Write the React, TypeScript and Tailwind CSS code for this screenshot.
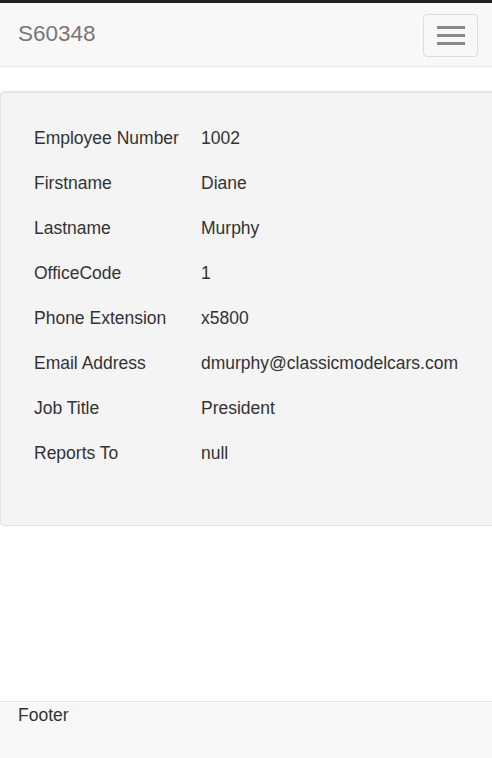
import React from "react";

const rows: [string, string][] = [
  ["Employee Number", "1002"],
  ["Firstname", "Diane"],
  ["Lastname", "Murphy"],
  ["OfficeCode", "1"],
  ["Phone Extension", "x5800"],
  ["Email Address", "dmurphy@classicmodelcars.com"],
  ["Job Title", "President"],
  ["Reports To", "null"],
];

export default function App() {
  return (
    <div
      className="w-[492px] h-[758px] flex flex-col bg-white text-[#333] overflow-hidden"
      style={{ fontFamily: '"Liberation Sans", Arial, sans-serif' }}
    >
      <div className="h-[3px] bg-[#222]" />
      <div className="h-[64px] shrink-0 bg-[#f8f8f8] border-b border-[#e7e7e7] flex items-center justify-between pl-[18px] pr-[14px]">
        <span className="text-[22.5px] text-[#777] leading-none">S60348</span>
        <button className="w-[55px] h-[43px] border border-[#ddd] rounded-[4px] flex flex-col items-center justify-center gap-[5px] mt-[1px]">
          <span className="block w-[28px] h-[3px] bg-[#888]" />
          <span className="block w-[28px] h-[3px] bg-[#888]" />
          <span className="block w-[28px] h-[3px] bg-[#888]" />
        </button>
      </div>
      <div className="h-[24px] shrink-0" />
      <div className="shrink-0 ml-0 w-[500px] bg-[#f4f4f4] border border-[#e3e3e3] rounded-[4px] shadow-[inset_0_1px_1px_rgba(0,0,0,0.05)] pt-[24px] pb-[49px] pl-[33px]">
        {rows.map(([k, v]) => (
          <div key={k} className="flex h-[45px] items-center text-[17.5px]">
            <span className="w-[167px] shrink-0">{k}</span>
            <span>{v}</span>
          </div>
        ))}
      </div>
      <div className="flex-1" />
      <div className="h-[57px] shrink-0 bg-[#f7f7f7] border-t border-[#e5e5e5] pl-[18px] pt-[1px]">
        <span className="text-[17.5px] leading-[24px]">Footer</span>
      </div>
    </div>
  );
}
